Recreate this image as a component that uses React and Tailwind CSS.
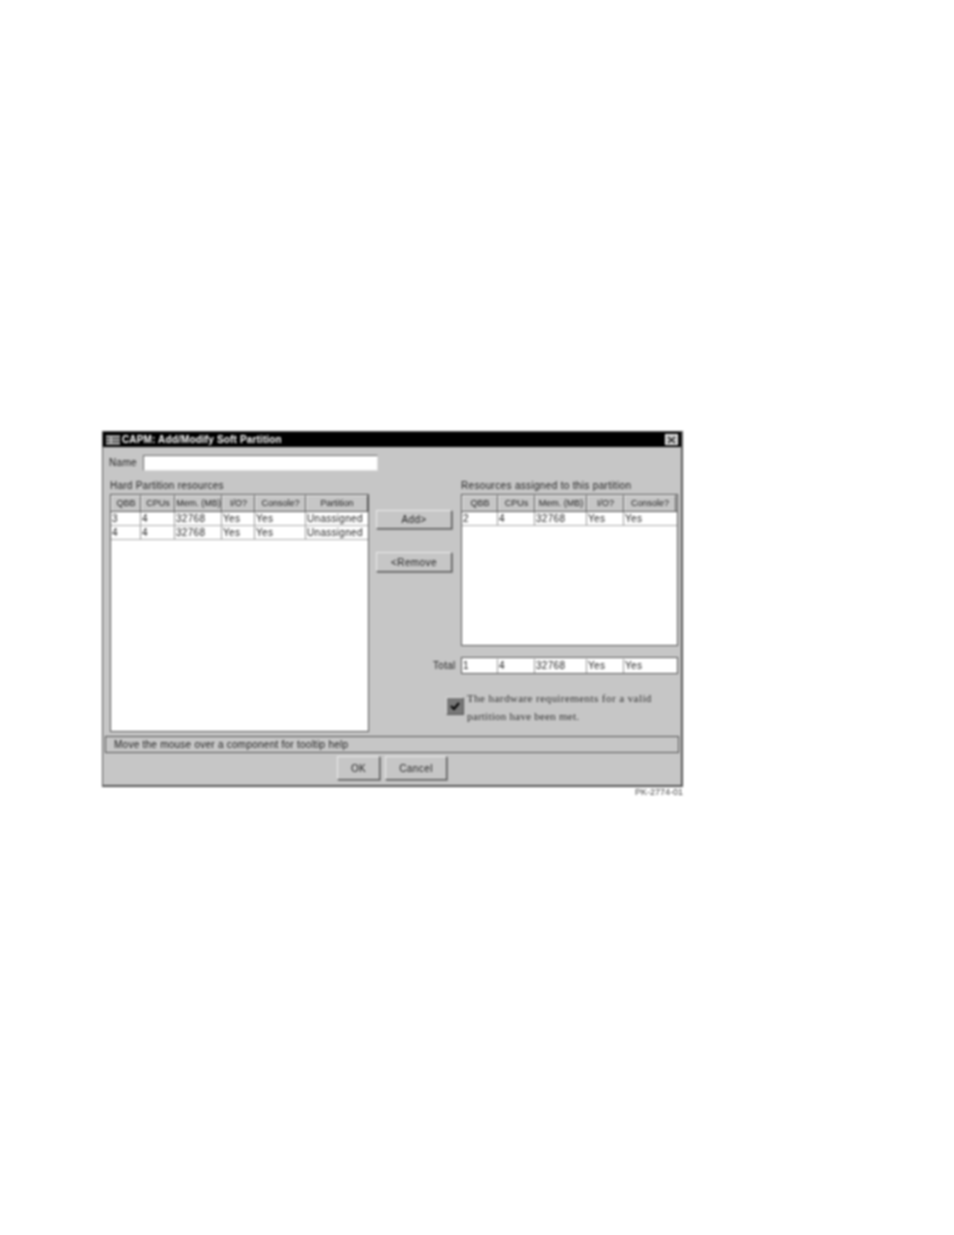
import React from "react";

const leftCols = ["w-[30px]", "w-[34px]", "w-[47px]", "w-[33px]", "w-[51px]", "w-[62px]"];
const rightCols = ["w-[36px]", "w-[37px]", "w-[52px]", "w-[37px]", "w-[52px]"];

const Btn = ({ className, children }) => (
  <button className={`flex items-center justify-center bg-[#c6c6c6] border border-t-[#ececec] border-l-[#ececec] border-r-[#555] border-b-[#555] shadow-[1px_1px_0_#888] text-[10px] tracking-[0.4px] text-[#222] ${className}`}>
    {children}
  </button>
);

const HeaderRow = ({ cols, labels }) => (
  <div className="flex h-[17px] bg-[#c6c6c6] border-b border-[#555]">
    {labels.map((label, i) => (
      <div
        key={label}
        className={`${cols[i]} flex items-center justify-center border-t border-l border-t-[#eee] border-l-[#eee] border-r border-r-[#555] text-[9px] text-[#222] whitespace-nowrap`}
      >
        {label}
      </div>
    ))}
  </div>
);

const DataRow = ({ cols, values, bordered = true }) => (
  <div className={`flex h-[14px] bg-white ${bordered ? "border-b border-[#aaa]" : ""}`}>
    {values.map((v, i) => (
      <div
        key={i}
        className={`${cols[i]} pl-[1px] flex items-center border-r border-[#999] last:border-r-0 text-[10px] tracking-[0.3px] text-[#222] whitespace-nowrap overflow-hidden`}
      >
        {v}
      </div>
    ))}
  </div>
);

const App = () => {
  return (
    <div className="w-[954px] h-[1235px] bg-white overflow-hidden pt-[431px] pl-[102px] font-['Liberation_Sans',Arial,sans-serif] blur-[0.8px]">
      <div className="w-[581px] h-[356px] bg-[#c6c6c6] border border-[#555] border-b-2 border-r-2">
        {/* Title bar */}
        <div className="h-[15px] bg-black flex items-center pl-[3px] pr-[3px]">
          <svg width="14" height="10" viewBox="0 0 14 10" className="mr-[2px]">
            <rect width="14" height="10" fill="#555" />
            <path d="M0 1.5h14M0 5h14M0 8.5h14M5 1v8" stroke="#f0f0f0" strokeWidth="1" />
          </svg>
          <span className="text-white text-[10px] font-bold leading-none tracking-[0.15px]">CAPM: Add/Modify Soft Partition</span>
          <div className="ml-auto w-[13px] h-[11px] bg-[#c6c6c6] flex items-center justify-center border border-white">
            <svg width="9" height="8" viewBox="0 0 9 8">
              <path d="M1 1l7 6M8 1l-7 6" stroke="#222" strokeWidth="1.5" />
            </svg>
          </div>
        </div>

        {/* Name */}
        <div className="flex items-center h-[17px] mt-[7px] pl-[6px]">
          <span className="w-[34px] text-[10px] tracking-[0.3px] text-[#222]">Name</span>
          <div className="w-[235px] h-[16px] bg-white border border-t-[#666] border-l-[#666] border-r-[#ddd] border-b-[#ddd]" />
        </div>

        <div className="flex mt-[8px]">
          {/* Left column */}
          <div className="ml-[7px] w-[259px]">
            <div className="h-[14px] text-[10px] leading-[14px] tracking-[0.25px] text-[#222]">Hard Partition resources</div>
            <div className="h-[238px] mt-[1px] bg-white border border-[#555]">
              <HeaderRow cols={leftCols} labels={["QBB", "CPUs", "Mem. (MB)", "I/O?", "Console?", "Partition"]} />
              <DataRow cols={leftCols} values={["3", "4", "32768", "Yes", "Yes", "Unassigned"]} />
              <DataRow cols={leftCols} values={["4", "4", "32768", "Yes", "Yes", "Unassigned"]} />
            </div>
          </div>

          {/* Add / Remove */}
          <div className="ml-[7px] w-[76px] pt-[31px] flex flex-col gap-[23px]">
            <Btn className="h-[19px]">Add&gt;</Btn>
            <Btn className="h-[20px]">&lt;Remove</Btn>
          </div>

          {/* Right column */}
          <div className="ml-[9px] w-[217px]">
            <div className="h-[14px] text-[10px] leading-[14px] tracking-[0.33px] text-[#222] whitespace-nowrap">Resources assigned to this partition</div>
            <div className="h-[152px] mt-[1px] bg-white border border-[#555]">
              <HeaderRow cols={rightCols} labels={["QBB", "CPUs", "Mem. (MB)", "I/O?", "Console?"]} />
              <DataRow cols={rightCols} values={["2", "4", "32768", "Yes", "Yes"]} />
            </div>

            <div className="relative mt-[11px] h-[17px] bg-white border border-[#555] flex items-center">
              <span className="absolute left-[-29px] top-[0px] text-[10px] text-[#222] tracking-[0.3px]">Total</span>
              <DataRow cols={rightCols} values={["1", "4", "32768", "Yes", "Yes"]} bordered={false} />
            </div>

            <div className="relative mt-[15px] h-[36px] pl-[6px] font-['Liberation_Serif',serif] text-[11px] leading-[18px] text-[#333] whitespace-nowrap">
              <div className="absolute left-[-15px] top-[8px] w-[18px] h-[18px] bg-[#777] border border-t-[#ddd] border-l-[#ddd] border-r-[#555] border-b-[#555] flex items-center justify-center">
                <svg width="12" height="10" viewBox="0 0 12 10">
                  <path d="M2 5l3 3 5-6" fill="none" stroke="#000" strokeWidth="2" />
                </svg>
              </div>
              <div className="tracking-[0.43px]">The hardware requirements for a valid</div>
              <div className="tracking-[0.25px]">partition have been met.</div>
            </div>
          </div>
        </div>

        {/* Status bar */}
        <div className="mt-[4px] ml-[2px] w-[574px] h-[17px] border border-[#555] flex items-center pl-[8px] text-[10px] tracking-[0.25px] text-[#222]">
          Move the mouse over a component for tooltip help
        </div>

        {/* OK / Cancel */}
        <div className="flex mt-[3px] pl-[234px] gap-[5px]">
          <Btn className="w-[43px] h-[24px]">OK</Btn>
          <Btn className="w-[62px] h-[24px]">Cancel</Btn>
        </div>
      </div>
      <div className="w-[581px] h-[12px] overflow-hidden flex justify-end text-[9px] leading-[10px] text-[#444] whitespace-nowrap">
        PK-2774-01
      </div>
    </div>
  );
};

export default App;
